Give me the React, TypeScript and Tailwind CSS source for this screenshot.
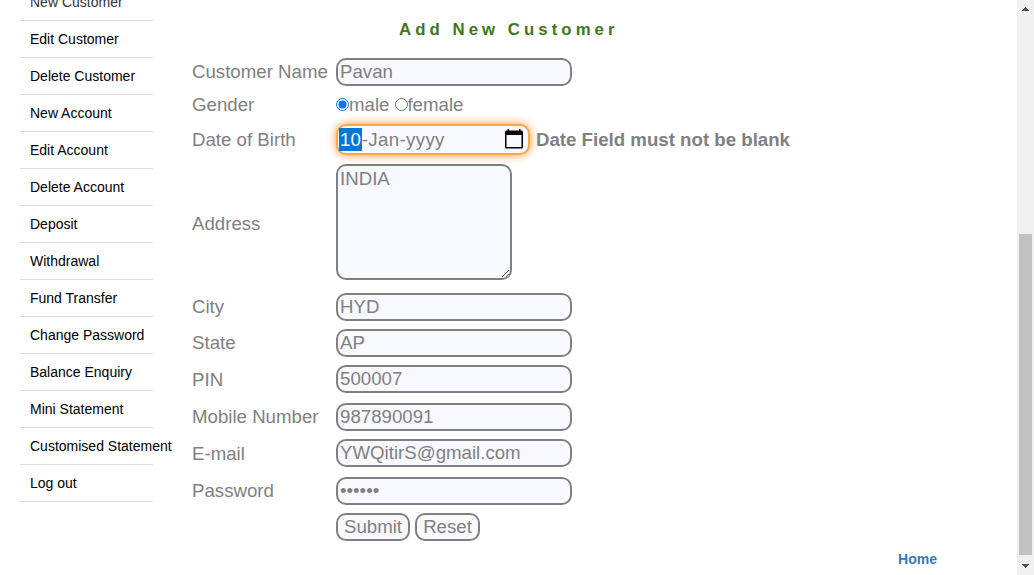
import type { ReactNode } from "react";

const links = [
  "New Customer",
  "Edit Customer",
  "Delete Customer",
  "New Account",
  "Edit Account",
  "Delete Account",
  "Deposit",
  "Withdrawal",
  "Fund Transfer",
  "Change Password",
  "Balance Enquiry",
  "Mini Statement",
  "Customised Statement",
  "Log out",
];

const box = "rounded-[10px] border-2 border-[#808080] bg-[#f8f8ff]";

function Row({
  label,
  className,
  labelClass = "",
  children,
}: {
  label?: string;
  className: string;
  labelClass?: string;
  children: ReactNode;
}) {
  return (
    <div className={`flex items-center ${className}`}>
      <div className={`w-36 shrink-0 whitespace-nowrap ${labelClass}`}>{label}</div>
      {children}
    </div>
  );
}

function Field({ value, type = "text" }: { value: string; type?: string }) {
  return (
    <input
      type={type}
      defaultValue={value}
      className={`${box} block h-7 w-[236px] px-[2px] pb-px outline-none`}
    />
  );
}

function CalendarIcon() {
  return (
    <svg width="20" height="20" viewBox="0 0 20 20" className="mb-px shrink-0">
      <path
        fillRule="evenodd"
        d="M1 3a1.5 1.5 0 0 1 1.5-1.5H3.5V0h1.5v1.5h10V0h1.5v1.5h1A1.5 1.5 0 0 1 19 3v15a1.5 1.5 0 0 1-1.5 1.5h-15A1.5 1.5 0 0 1 1 18ZM2.5 6v12h15V6Z"
        fill="#000"
      />
    </svg>
  );
}

function Sidebar() {
  return (
    <nav className="-mt-4 ml-5 w-[133px] shrink-0 text-sm text-black">
      {links.map((text, i) => (
        <a
          key={text}
          href="#"
          className={`flex h-[37px] items-center whitespace-nowrap border-b border-[#dddddd] pl-[10px] ${i === 0 ? "text-[#333333]" : ""}`}
        >
          {text}
        </a>
      ))}
    </nav>
  );
}

function Scrollbar() {
  return (
    <div className="flex w-[17px] shrink-0 flex-col items-center bg-[#f0f0f0]">
      <svg width="17" height="17" shapeRendering="crispEdges" className="shrink-0">
        <path d="M8 7h1v1h1v1h1v1h1v1H5v-1h1V9h1V8h1Z" fill="#505050" />
      </svg>
      <div className="mt-[217px] h-[321px] w-[13px] bg-[#c1c1c1]" />
      <svg width="17" height="20" shapeRendering="crispEdges" className="shrink-0">
        <path d="M5 9h7v1h-1v1h-1v1H9v1H8v-1H7v-1H6v-1H5Z" fill="#505050" />
      </svg>
    </div>
  );
}

export default function App() {
  return (
    <div className="flex h-[575px] w-[1034px] overflow-hidden bg-white font-['Liberation_Sans',Arial,sans-serif]">
      <Sidebar />
      <main className="ml-[39px] flex min-w-0 flex-1 flex-col text-[18.67px] leading-6 text-[#808080]">
        <h1 className="mt-[18px] mb-3 ml-[207px] text-[16.8px] font-bold tracking-[4.05px] text-[#437620]">
          Add New Customer
        </h1>
        <Row label="Customer Name" className="h-9">
          <Field value="Pavan" />
        </Row>
        <Row label="Gender" className="h-[30px]">
          <svg width="13" height="13" className="mb-px shrink-0">
            <circle cx="6.5" cy="6.5" r="6" fill="#fff" stroke="#0075ff" />
            <circle cx="6.5" cy="6.5" r="4" fill="#0075ff" />
          </svg>
          <span className="mr-[6px]">male</span>
          <svg width="13" height="13" className="mb-px shrink-0">
            <circle cx="6.5" cy="6.5" r="6" fill="#fff" stroke="#767676" />
          </svg>
          <span className="-ml-px">female</span>
        </Row>
        <Row label="Date of Birth" className="h-[39px]">
          <div className="flex h-[31px] w-[194px] items-center rounded-[10px] border-2 border-[#ffa64d] bg-[#f8f8ff] pr-[4px] pl-px shadow-[0_0_10px_#ff9632]">
            <span className="h-[23px] bg-[#0078d7] px-px leading-[23px] text-white">10</span>
            <span className="flex-1 tracking-[0.35px]">-Jan-yyyy</span>
            <CalendarIcon />
          </div>
          <strong className="ml-[6px] whitespace-nowrap">Date Field must not be blank</strong>
        </Row>
        <Row label="Address" className="h-[126px]" labelClass="pt-[3px]">
          <textarea
            defaultValue="INDIA"
            className={`${box} block h-[116px] w-44 resize px-[2px] pt-px leading-6 outline-none`}
          />
        </Row>
        <Row label="City" className="mt-1 h-9">
          <Field value="HYD" />
        </Row>
        <Row label="State" className="h-9">
          <Field value="AP" />
        </Row>
        <Row label="PIN" className="h-9" labelClass="pt-[2px]">
          <Field value="500007" />
        </Row>
        <Row label="Mobile Number" className="mt-[2px] h-9">
          <Field value="987890091" />
        </Row>
        <Row label="E-mail" className="h-9" labelClass="pt-[2px]">
          <Field value="YWQitirS@gmail.com" />
        </Row>
        <Row label="Password" className="mt-[2px] h-9">
          <Field value="secret" type="password" />
        </Row>
        <Row className="h-9">
          <button className={`${box} mr-[5px] h-7 w-[74px] leading-6`}>Submit</button>
          <button className={`${box} h-7 w-[65px] leading-6`}>Reset</button>
        </Row>
        <a href="#" className="mt-1 mr-20 self-end text-sm leading-5 font-bold text-[#337ab7]">
          Home
        </a>
      </main>
      <Scrollbar />
    </div>
  );
}
